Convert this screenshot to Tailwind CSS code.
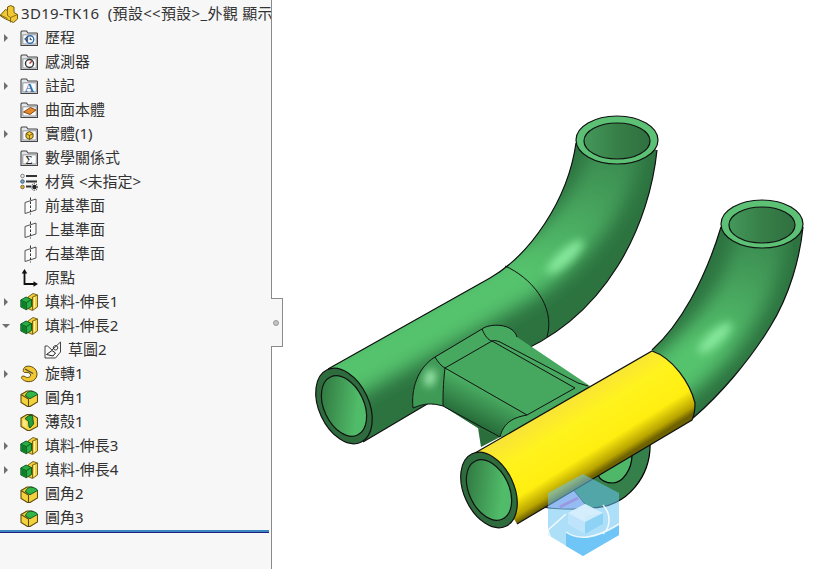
<!DOCTYPE html>
<html lang="zh-Hant">

<head>
	<meta charset="UTF-8">
	<meta name="viewport" content="width=device-width, initial-scale=1.0">
	<title>3D19-TK16</title>
	<script src="https://cdn.jsdelivr.net/npm/@tailwindcss/browser@4"></script>
</head>

<body class="bg-white">

	<!-- icon sheet -->
	<svg class="hidden" width="0" height="0">
		<symbol id="caret" viewBox="0 0 8 10"><path d="M2 1l4 4-4 4z" fill="#6f6f6f" /></symbol>
		<symbol id="caretDown" viewBox="0 0 10 8"><path d="M1 2h8L5 6z" fill="#6f6f6f" /></symbol>
		<symbol id="folder" viewBox="0 0 18 18">
			<path d="M1 16.500V3q0-1 1-1h4.500l1.500 2h8.500q1 0 1 1v11.500z" fill="#e4e8eb" stroke="#444" stroke-width="1.100" />
			<path d="M2.800 5.800h13.500v9.200H2.800z" fill="#fbfcfd" stroke="#7d8287" stroke-width=".8" />
		</symbol>
		<symbol id="extrude" viewBox="0 0 18 18">
			<path d="M8 4l5-3.500 4.500 1.500v12l-5 3.500-4.500-2z" fill="#f2cd3c" stroke="#6d5a10" stroke-width=".9" />
			<path d="M12.500 4l5-2M12.500 4v13" stroke="#6d5a10" stroke-width=".9" fill="none" />
			<path d="M14.500 4v10.500" stroke="#fff3b0" stroke-width="1.200" fill="none" />
			<path d="M.8 7l5.200-3 5.500 2.500v7l-5.200 3.200-5.500-2.700z" fill="#26b043" stroke="#0d4f20" stroke-width=".9" />
			<path d="M.8 7l5.500 2.700 5.200-3.200M6.300 9.700v7" stroke="#0d4f20" stroke-width=".9" fill="none" />
			<path d="M1.300 7.800l4.500 2.300v5.700l-4.500-2.300z" fill="#0f7d29" />
		</symbol>
		<symbol id="fillet" viewBox="0 0 18 18">
			<path d="M1 5.500L7 2h5l5.500 3.500v7.500L10 17.500H7.500L1 13.500z" fill="#f4d23e" stroke="#5d4c0c" stroke-width="1.100" />
			<path d="M1 5.500L8.500 10v7.500" stroke="#5d4c0c" stroke-width="1.100" fill="none" />
			<path d="M5.500 7C6 3.500 9 1.800 12 2.300c3 .5 5.500 2 5.500 3.200L10 9.700z" fill="#2fb548" stroke="#0d4f20" stroke-width=".9" />
		</symbol>
		<symbol id="shell" viewBox="0 0 18 18">
			<path d="M1 5L7 1.500h5L17.500 5v8.500L10 17.500H7.500L1 13.500z" fill="#f4d23e" stroke="#5d4c0c" stroke-width="1.100" />
			<path d="M5 5.500l4-3h3.500l1 8.500-3.500 4-1-1-.5-5.500z" fill="#1fa33a" stroke="#0d4f20" stroke-width=".9" />
			<path d="M3 6v6.500l3.500 2.500V8.500z" fill="#fbe88a" />
		</symbol>
		<symbol id="plane" viewBox="0 0 18 18">
			<path d="M5 5.500L16 2v11L5 16.500z" fill="#fafafa" stroke="#555" />
			<path d="M10.500 .5v17" stroke="#333" stroke-dasharray="2.500 1.500" />
		</symbol>
	</svg>

	<div class="relative flex h-[569px] w-[831px] overflow-hidden bg-white font-['Noto_Sans','Noto_Sans_CJK_TC',sans-serif] text-[15px] text-[#333]">

		<!-- feature tree -->
		<aside class="w-[272px] shrink-0 border-r border-[#8a8a8a] bg-[#f7f7f7] pt-[2px] [&_span]:pb-[2px]">
			<div class="flex h-6 items-center overflow-hidden whitespace-nowrap">
				<svg class="mr-[3px] size-[18px] shrink-0" viewBox="0 0 18 18">
					<path d="M.5 10l5-5.500 2 1V2l3-1.500L14 2v5.500l3.500 2v4.500l-4 3.500-8-3.500-5-3z" fill="#f2c832" stroke="#6d5a10" />
					<path d="M7.500 5.500v5l3 2 7-3M10.500 12.500v5M.5 10l7 3.500" stroke="#6d5a10" fill="none" stroke-width=".8" />
				</svg>
				<span class="tracking-[.3px]">3D19-TK16&nbsp; (預設&lt;&lt;預設&gt;_外觀 顯示狀態 1&gt;)</span>
			</div>

			<div class="flex h-6 items-center">
				<svg class="mx-[2px] h-[10px] w-[8px]"><use href="#caret" /></svg>
				<svg class="ml-[8px] size-[18px]" viewBox="0 0 18 18"><use href="#folder" />
					<circle cx="10" cy="10.500" r="3.800" fill="#fff" stroke="#2f6db0" stroke-width="1.400" />
					<path d="M4.500 10l3.200-2.500v5zM10 8.500v2.200h2" fill="#2f6db0" stroke="#333" stroke-width=".6" />
				</svg>
				<span class="ml-[7px]">歷程</span>
			</div>
			<div class="flex h-6 items-center pl-[20px]">
				<svg class="size-[18px]" viewBox="0 0 18 18"><use href="#folder" />
					<circle cx="9.500" cy="10.500" r="4" fill="#fff" stroke="#333" stroke-width="1.400" />
					<path d="M9.500 10.500l2.500-2.500" stroke="#c0392b" stroke-width="1.400" />
				</svg>
				<span class="ml-[7px]">感測器</span>
			</div>
			<div class="flex h-6 items-center">
				<svg class="mx-[2px] h-[10px] w-[8px]"><use href="#caret" /></svg>
				<svg class="ml-[8px] size-[18px]" viewBox="0 0 18 18"><use href="#folder" />
					<text x="4.800" y="14.500" font-family="Liberation Serif" font-size="13" font-weight="700" fill="#2f6db0">A</text>
				</svg>
				<span class="ml-[7px]">註記</span>
			</div>
			<div class="flex h-6 items-center pl-[20px]">
				<svg class="size-[18px]" viewBox="0 0 18 18"><use href="#folder" />
					<path d="M3.500 11l7-4.500 5.500 2.500-6 4.500z" fill="#e8892b" stroke="#7a3f0c" stroke-width=".9" />
				</svg>
				<span class="ml-[7px]">曲面本體</span>
			</div>
			<div class="flex h-6 items-center">
				<svg class="mx-[2px] h-[10px] w-[8px]"><use href="#caret" /></svg>
				<svg class="ml-[8px] size-[18px]" viewBox="0 0 18 18"><use href="#folder" />
					<path d="M6 8.500l3.500-2 3.500 2v4l-3.500 2-3.500-2z" fill="#f2c832" stroke="#5d4c0c" />
					<path d="M6 8.500l3.500 2 3.500-2M9.500 10.500v4" stroke="#5d4c0c" stroke-width=".8" fill="none" />
				</svg>
				<span class="ml-[7px]">實體(1)</span>
			</div>
			<div class="flex h-6 items-center pl-[20px]">
				<svg class="size-[18px]" viewBox="0 0 18 18"><use href="#folder" />
					<text x="5.500" y="14.500" font-family="Liberation Serif" font-size="12" fill="#222">Σ</text>
				</svg>
				<span class="ml-[7px]">數學關係式</span>
			</div>
			<div class="flex h-6 items-center pl-[20px]">
				<svg class="size-[18px]" viewBox="0 0 18 18">
					<circle cx="2.500" cy="3" r="1.800" fill="#eee" stroke="#666" stroke-width=".8" />
					<circle cx="2.500" cy="8.500" r="1.800" fill="#6aa9d8" stroke="#345" stroke-width=".8" />
					<circle cx="2.500" cy="14" r="1.800" fill="#e0b020" stroke="#654" stroke-width=".8" />
					<path d="M6 3h11M6 8.500h11M6 13.500h5" stroke="#333" stroke-width="1.800" />
					<circle cx="14.500" cy="14" r="2.300" fill="#222" />
					<circle cx="14.500" cy="14" r="3.300" fill="none" stroke="#222" stroke-dasharray="1.200 1.200" />
				</svg>
				<span class="ml-[7px]">材質 &lt;未指定&gt;</span>
			</div>
			<div class="flex h-6 items-center pl-[20px]">
				<svg class="size-[18px]"><use href="#plane" /></svg><span class="ml-[7px]">前基準面</span>
			</div>
			<div class="flex h-6 items-center pl-[20px]">
				<svg class="size-[18px]"><use href="#plane" /></svg><span class="ml-[7px]">上基準面</span>
			</div>
			<div class="flex h-6 items-center pl-[20px]">
				<svg class="size-[18px]"><use href="#plane" /></svg><span class="ml-[7px]">右基準面</span>
			</div>
			<div class="flex h-6 items-center pl-[20px]">
				<svg class="size-[18px]" viewBox="0 0 18 18">
					<path d="M4.500 3v12H16" stroke="#111" stroke-width="1.800" fill="none" />
					<path d="M4.500 0l2.800 4.500H1.700zM18 15l-4.500 2.800v-5.600z" fill="#111" />
				</svg>
				<span class="ml-[7px]">原點</span>
			</div>
			<div class="flex h-6 items-center">
				<svg class="mx-[2px] h-[10px] w-[8px]"><use href="#caret" /></svg>
				<svg class="ml-[8px] size-[18px]"><use href="#extrude" /></svg>
				<span class="ml-[7px]">填料-伸長1</span>
			</div>
			<div class="flex h-6 items-center">
				<svg class="mx-[1px] h-[8px] w-[10px]"><use href="#caretDown" /></svg>
				<svg class="ml-[8px] size-[18px]"><use href="#extrude" /></svg>
				<span class="ml-[7px]">填料-伸長2</span>
			</div>
			<div class="flex h-6 items-center pl-[44px]">
				<svg class="size-[18px]" viewBox="0 0 18 18">
					<path d="M1 5h2.500l4.500 4 8.500-8v10l-5 6H1z" fill="#fafafa" stroke="#444" />
					<path d="M2.500 13.500L8 9.500l3.500 2.500-2.500 3zM11.500 9a2.200 2.200 0 1 1 .1 0" fill="none" stroke="#222" />
				</svg>
				<span class="ml-[6px]">草圖2</span>
			</div>
			<div class="flex h-6 items-center">
				<svg class="mx-[2px] h-[10px] w-[8px]"><use href="#caret" /></svg>
				<svg class="ml-[8px] size-[18px]" viewBox="0 0 18 18">
					<path d="M6 1.500C11 0 17 3.500 17 9s-5 8.500-10 7.500C3.500 15.800 1 13.500 1.500 12c.4-1.200 2.400-1.200 3.600-.3 2 1.500 5.500.8 5.500-1.700 0-2-3-3-5.500-2.500C2.500 8 2.500 2.700 6 1.500z" fill="#f2c832" stroke="#5d4c0c" />
					<path d="M5 4l8 4.500" stroke="#444" stroke-width="1.200" />
				</svg>
				<span class="ml-[7px]">旋轉1</span>
			</div>
			<div class="flex h-6 items-center pl-[20px]">
				<svg class="size-[18px]"><use href="#fillet" /></svg><span class="ml-[7px]">圓角1</span>
			</div>
			<div class="flex h-6 items-center pl-[20px]">
				<svg class="size-[18px]"><use href="#shell" /></svg><span class="ml-[7px]">薄殼1</span>
			</div>
			<div class="flex h-6 items-center">
				<svg class="mx-[2px] h-[10px] w-[8px]"><use href="#caret" /></svg>
				<svg class="ml-[8px] size-[18px]"><use href="#extrude" /></svg>
				<span class="ml-[7px]">填料-伸長3</span>
			</div>
			<div class="flex h-6 items-center">
				<svg class="mx-[2px] h-[10px] w-[8px]"><use href="#caret" /></svg>
				<svg class="ml-[8px] size-[18px]"><use href="#extrude" /></svg>
				<span class="ml-[7px]">填料-伸長4</span>
			</div>
			<div class="flex h-6 items-center pl-[20px]">
				<svg class="size-[18px]"><use href="#fillet" /></svg><span class="ml-[7px]">圓角2</span>
			</div>
			<div class="flex h-6 items-center pl-[20px]">
				<svg class="size-[18px]"><use href="#fillet" /></svg><span class="ml-[7px]">圓角3</span>
			</div>

			<div class="mr-[2px] h-[3px] border-b border-[#1a237e] bg-[#3c85c0]"></div>
		</aside>

		<!-- panel grip -->
		<div class="absolute left-[271px] top-[298px] flex h-[49px] w-[12px] items-center rounded-r-[1px] border border-l-0 border-[#8a8a8a] bg-[#f7f7f7] pl-[2px]">
			<div class="size-[6px] rounded-full border border-[#999] bg-[#c4c4c4]"></div>
		</div>

		<!-- model view -->
		<svg class="h-[569px] w-[559px]" viewBox="272 0 559 569">
			<defs>
				<filter id="blur8" x="-30%" y="-30%" width="160%" height="160%"><feGaussianBlur stdDeviation="9" /></filter>
				<filter id="blur4" x="-50%" y="-50%" width="200%" height="200%"><feGaussianBlur stdDeviation="4" /></filter>
				<linearGradient id="bandA" gradientUnits="userSpaceOnUse" x1="617" y1="150" x2="560" y2="280">
					<stop offset="0" stop-color="#3a8a4f" /><stop offset="1" stop-color="#55c26d" />
				</linearGradient>
				<linearGradient id="bandB" gradientUnits="userSpaceOnUse" x1="762" y1="235" x2="715" y2="350">
					<stop offset="0" stop-color="#3a8a4f" /><stop offset="1" stop-color="#55c26d" />
				</linearGradient>
				<linearGradient id="bore" x1="0" y1="0" x2="1" y2="1">
					<stop offset="0" stop-color="#2a6a39" /><stop offset=".7" stop-color="#50bb68" />
				</linearGradient>
				<linearGradient id="topBore" x1="0" y1="0" x2="1" y2="0">
					<stop offset="0" stop-color="#44985a" /><stop offset=".5" stop-color="#377f48" /><stop offset="1" stop-color="#2f7040" />
				</linearGradient>
				<linearGradient id="yellow" gradientUnits="userSpaceOnUse" x1="600" y1="380" x2="641" y2="446">
					<stop offset="0" stop-color="#f8e436" /><stop offset=".3" stop-color="#fff31e" /><stop offset=".72" stop-color="#ffee10" /><stop offset=".92" stop-color="#b8a400" /><stop offset="1" stop-color="#6e6200" />
				</linearGradient>
				<linearGradient id="blockSide" gradientUnits="userSpaceOnUse" x1="480" y1="385" x2="460" y2="425">
					<stop offset="0" stop-color="#4cb265" /><stop offset="1" stop-color="#1f5c30" />
				</linearGradient>
				<clipPath id="pipeA"><path d="M328 369L490 278C530 255 568 200 576 143L657 150C650 220 610 320 505 358L363 442z" /></clipPath>
				<clipPath id="pipeB"><path d="M652 350C680 325 705 280 721 227L803 227C800 257 790 295 770 327C750 360 720 395 693 418z" /></clipPath>
			</defs>

			<!-- disc behind the yellow pipe -->
			<path d="M650 440C652 475 628 508 590 508C570 510 555 508 540 507L600 470z" fill="#35804a" stroke="#000" stroke-width="1.200" />
			<path d="M632 455C632 470 622 483 613 483C606 483 600 480 598 475z" fill="#4fb768" stroke="#000" stroke-width="1.200" />
			<path d="M478 428L481 447L502 436z" fill="#2b6e3c" />
			<path d="M543 507L572 488L588 508C570 510 555 509 543 507z" fill="#c5b0ef" stroke="#222" stroke-width=".8" />
			<path d="M560 507L578 498" stroke="#d062c8" stroke-width="3" />

			<!-- first pipe -->
			<path d="M328 369L490 278C530 255 568 200 576 143L657 150C650 220 610 320 505 358L363 442z" fill="#2c7340" />
			<g clip-path="url(#pipeA)">
				<path d="M325 385L500 287C570 250 612 190 617 140" fill="none" stroke="url(#bandA)" stroke-width="52" filter="url(#blur8)" />
				<ellipse cx="565" cy="257" rx="7" ry="24" transform="rotate(48 565 257)" fill="#86e89c" filter="url(#blur4)" />
			</g>
			<path d="M328 369L490 278C530 255 568 200 576 143M657 150C650 220 610 320 505 358L363 442" fill="none" stroke="#111" stroke-width="1.200" />
			<path d="M505 266C530 277 556 305 547 337" fill="none" stroke="#111" stroke-width="1" />

			<!-- connecting block -->
			<path d="M413 408C411 390 417 368 435 357L482 329C490 323 513 323 517 337L590 386L540 445L500 437L478 428L443 406C432 403 425 403 413 408z" fill="#47a85f" />
			<path d="M445 368L527 415C510 418 503 425 500 437L478 428L443 406C443 395 443 385 445 368z" fill="url(#blockSide)" />
			<path d="M413 408C411 390 417 368 435 357C438 362 441 366 445 368C443 385 443 395 443 406C432 403 425 403 413 408z" fill="#3f9a56" />
			<ellipse cx="430" cy="378" rx="5" ry="9" transform="rotate(15 430 378)" fill="#a8f3b6" filter="url(#blur4)" />
			<path d="M445 368L492 341L575 388L527 415z" fill="#46a85e" />
			<path d="M413 408C411 390 417 368 435 357L482 329C490 323 513 323 517 337M435 357C438 362 441 366 445 368L527 415C510 418 503 425 500 437M445 368L492 341L575 388L527 415M445 368C443 385 443 395 443 406M482 329C485 336 488 340 492 341C495 340 497 341 500 342L578 383L588 386M413 408C425 403 432 403 443 406L500 437" fill="none" stroke="#111" stroke-width="1" />

			<!-- second pipe -->
			<path d="M652 350C680 325 705 280 721 227L803 227C800 257 790 295 770 327C750 360 720 395 693 418z" fill="#2c7340" />
			<g clip-path="url(#pipeB)">
				<path d="M660 385C715 345 758 290 762 225" fill="none" stroke="url(#bandB)" stroke-width="52" filter="url(#blur8)" />
				<ellipse cx="715" cy="338" rx="7" ry="22" transform="rotate(48 715 338)" fill="#86e89c" filter="url(#blur4)" />
			</g>
			<path d="M652 350C680 325 705 280 721 227M803 227C800 257 790 295 770 327C750 360 720 395 693 418" fill="none" stroke="#111" stroke-width="1.200" />

			<!-- yellow section -->
			<path d="M475 453L652 351C673 358 690 383 695 403C695 410 694 416 692 420L517 524z" fill="url(#yellow)" />
			<path d="M475 453L652 351C673 358 690 383 695 403C695 410 694 416 692 420L517 524" fill="none" stroke="#111" stroke-width="1.200" />

			<!-- open ends -->
			<g transform="rotate(-25 344 406)">
				<ellipse cx="344" cy="406" rx="25" ry="40" fill="#2e6b3d" stroke="#111" stroke-width="1.200" />
				<ellipse cx="344" cy="406" rx="20" ry="32" fill="url(#bore)" stroke="#111" stroke-width="1.200" />
			</g>
			<g transform="rotate(-25 489 490)">
				<ellipse cx="489" cy="490" rx="25" ry="40" fill="#2e6b3d" stroke="#111" stroke-width="1.200" />
				<ellipse cx="489" cy="490" rx="20" ry="32" fill="url(#bore)" stroke="#111" stroke-width="1.200" />
			</g>
			<ellipse cx="617" cy="140" rx="41" ry="24" fill="#5cc075" stroke="#111" stroke-width="1.200" />
			<ellipse cx="617" cy="141" rx="33" ry="18" fill="url(#topBore)" stroke="#111" stroke-width="1.200" />
			<ellipse cx="762" cy="224" rx="41" ry="24" fill="#5cc075" stroke="#111" stroke-width="1.200" />
			<ellipse cx="762" cy="225" rx="33" ry="18" fill="url(#topBore)" stroke="#111" stroke-width="1.200" />

			<!-- watermark -->
			<path d="M583 474L619 493V535L583 556L548 535V493z" fill="#6cc4f4" fill-opacity=".55" />
			<path d="M566 532C580 542 600 536 619 524V535L583 556L566 546z" fill="#6fc6f6" />
			<path d="M568 513L585 504L603 513V524L585 534L568 524z" fill="#bfe5fa" fill-opacity=".85" />
			<path d="M585 516L603 513V524L585 534z" fill="#8ed2f6" />
			<path d="M568 513L585 504L603 513L585 522z" fill="#d9f0fd" fill-opacity=".85" />
			<path d="M566 532C580 542 600 536 619 524M566 514L548 530C550 540 556 548 566 552M603 505C612 515 610 528 603 534" fill="none" stroke="#fff" stroke-width="1.500" stroke-opacity=".85" />
		</svg>
	</div>

</body>

</html>
